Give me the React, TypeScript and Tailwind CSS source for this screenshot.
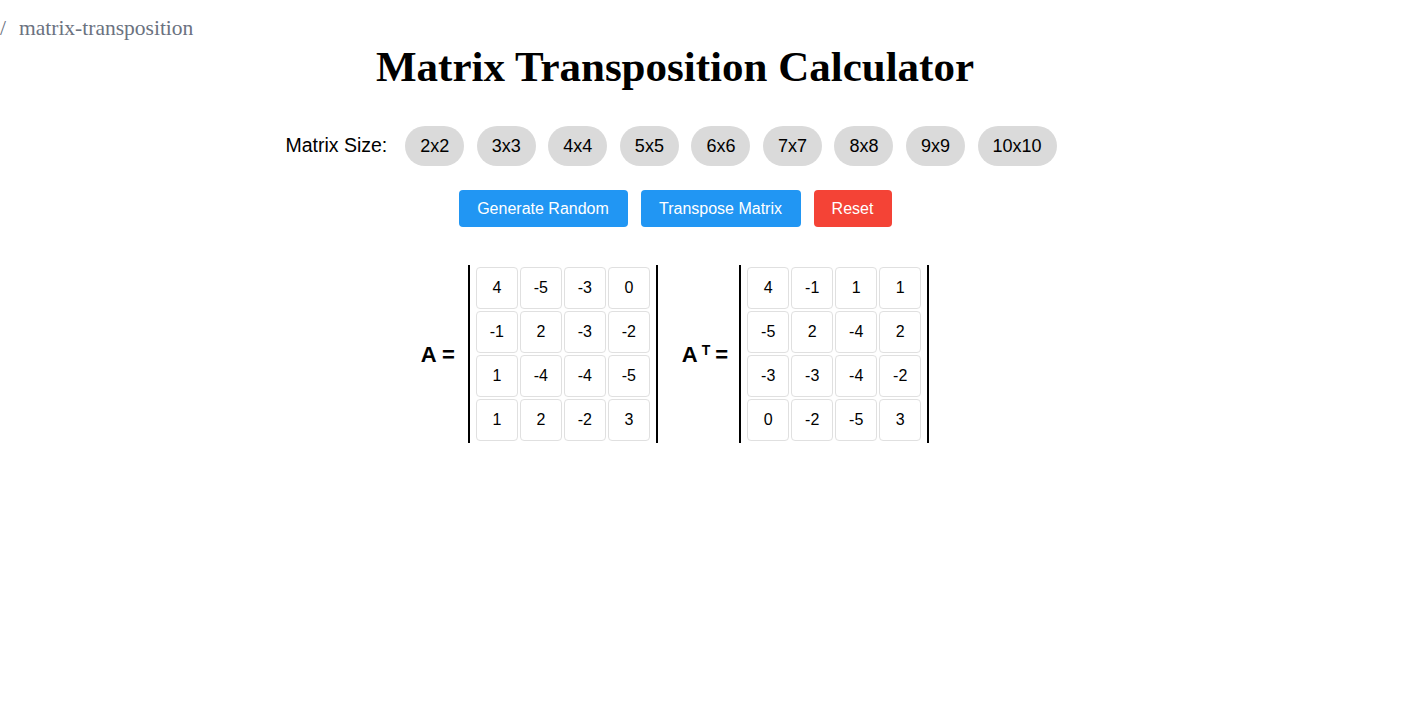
import { useState } from "react";

const sizes = [2, 3, 4, 5, 6, 7, 8, 9, 10];

const initial = [
    [4, -5, -3, 0],
    [-1, 2, -3, -2],
    [1, -4, -4, -5],
    [1, 2, -2, 3],
];

const transpose = (m: number[][]) => m[0].map((_, c) => m.map((row) => row[c]));

const MatrixView = ({ data }: { data: number[][] }) => (
    <div className="border-x-2 border-black px-[6px] py-[2px] flex flex-col gap-[2px]">
        {data.map((row, r) => (
            <div key={r} className="flex gap-[2px]">
                {row.map((v, c) => (
                    <div
                        key={c}
                        className="w-[42px] h-[42px] border border-[#e0e0e0] rounded-[4px] flex items-center justify-center text-[16px] text-black"
                    >
                        {v}
                    </div>
                ))}
            </div>
        ))}
    </div>
);

export default function App() {
    const [matrix, setMatrix] = useState<number[][]>(initial);
    const [result, setResult] = useState<number[][]>(transpose(initial));

    const generate = (n: number) => {
        const m = Array.from({ length: n }, () =>
            Array.from({ length: n }, () => Math.floor(Math.random() * 11) - 5)
        );
        setMatrix(m);
        setResult(transpose(m));
    };

    return (
        <div className="min-h-screen bg-white font-['Liberation_Sans',Arial,sans-serif]">
            <div className="h-[56px] pt-[15px] flex font-['Liberation_Serif','Times_New_Roman',serif] text-[21.5px] leading-[26px] text-[#6b7280]">
                <span>/</span>
                <span className="ml-[13px]">matrix-transposition</span>
            </div>
            <div className="w-[1350px] flex flex-col items-center">
                <h1 className="-mt-[17px] font-['Liberation_Serif','Times_New_Roman',serif] font-bold text-[43px] leading-[56px] text-black">
                    Matrix Transposition Calculator
                </h1>
                <div className="mt-[31px] mr-[8px] flex items-center gap-[12.5px]">
                    <span className="text-[19.5px] text-black mr-[5.5px]">Matrix Size:</span>
                    {sizes.map((n) => (
                        <button
                            key={n}
                            onClick={() => generate(n)}
                            className="h-[40px] px-[15px] rounded-full bg-[#dadada] text-[18px] text-black"
                        >
                            {n}x{n}
                        </button>
                    ))}
                </div>
                <div className="mt-[24px] flex gap-[13px]">
                    <button
                        onClick={() => generate(matrix.length)}
                        className="h-[37px] w-[169px] rounded-[4px] bg-[#2196f3] text-white text-[16px]"
                    >
                        Generate Random
                    </button>
                    <button
                        onClick={() => setResult(transpose(matrix))}
                        className="h-[37px] w-[160px] rounded-[4px] bg-[#2196f3] text-white text-[16px]"
                    >
                        Transpose Matrix
                    </button>
                    <button
                        onClick={() => {
                            setMatrix(initial);
                            setResult(transpose(initial));
                        }}
                        className="h-[37px] w-[78px] rounded-[4px] bg-[#f44336] text-white text-[16px]"
                    >
                        Reset
                    </button>
                </div>
                <div className="mt-[38px] flex items-center">
                    <span className="text-[22px] font-bold text-black mr-[13px]">A =</span>
                    <MatrixView data={matrix} />
                    <span className="ml-[24px] mr-[11px] flex items-baseline text-[22px] font-bold text-black">
                        <span>A</span>
                        <span className="ml-[4px] text-[14px] relative -top-[7px]">T</span>
                        <span className="ml-[5px]">=</span>
                    </span>
                    <MatrixView data={result} />
                </div>
            </div>
        </div>
    );
}
